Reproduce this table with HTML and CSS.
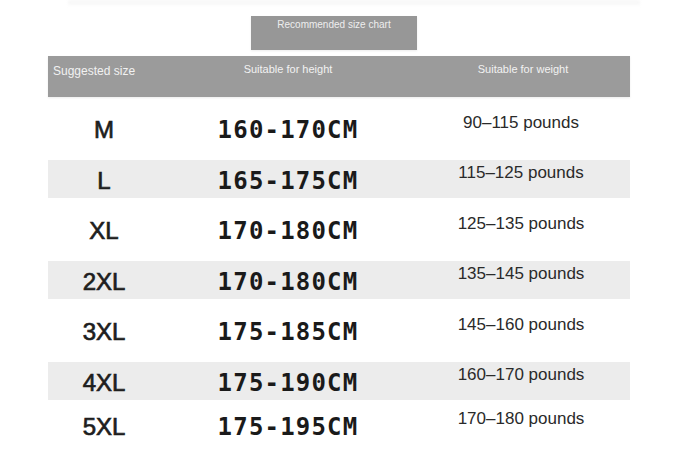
FILE: index.html
```html
<!DOCTYPE html>
<html>
<head>
<meta charset="utf-8">
<link rel="stylesheet" href="styles.css">
</head>
<body>
<div class="page">
  <div class="ghost"></div>
  <div class="title-wrap">
    <div class="title">Recommended size chart</div>
  </div>
  <div class="chart">
    <div class="head">
      <div class="h h-size">Suggested size</div>
      <div class="h h-height">Suitable for height</div>
      <div class="h h-weight">Suitable for weight</div>
    </div>
    <div class="row tall">
      <div class="size">M</div><div class="height">160-170CM</div><div class="weight">90–115 pounds</div>
    </div>
    <div class="row band">
      <div class="size">L</div><div class="height">165-175CM</div><div class="weight">115–125 pounds</div>
    </div>
    <div class="row tall">
      <div class="size">XL</div><div class="height">170-180CM</div><div class="weight">125–135 pounds</div>
    </div>
    <div class="row band">
      <div class="size">2XL</div><div class="height">170-180CM</div><div class="weight">135–145 pounds</div>
    </div>
    <div class="row tall">
      <div class="size">3XL</div><div class="height">175-185CM</div><div class="weight">145–160 pounds</div>
    </div>
    <div class="row band">
      <div class="size">4XL</div><div class="height">175-190CM</div><div class="weight">160–170 pounds</div>
    </div>
    <div class="row last">
      <div class="size">5XL</div><div class="height">175-195CM</div><div class="weight">170–180 pounds</div>
    </div>
  </div>
</div>
</body>
</html>
```

FILE: styles.css
```css
html, body {
  margin: 0;
  padding: 0;
  background: #ffffff;
}
body {
  width: 685px;
  height: 462px;
  overflow: hidden;
  font-family: "Liberation Sans", Arial, sans-serif;
}
.page {
  padding: 0 55px 0 48px;
}
.ghost {
  height: 5px;
  margin: 0 -10px 0 20px;
  background: #f8f8f8;
  filter: blur(1.5px);
}
.title-wrap {
  display: flex;
  padding: 11px 0 0 203px;
  height: 40px;
}
.title {
  width: 166px;
  height: 34px;
  background: #979797;
  color: #eeeeee;
  font-size: 10px;
  text-align: center;
  padding-top: 3px;
  box-sizing: border-box;
  box-shadow: 0 1px 2px rgba(0,0,0,0.08);
}
.chart {
  width: 582px;
}
.head {
  display: grid;
  grid-template-columns: 112px 256px 214px;
  height: 41px;
  background: #9b9b9b;
  color: #f2f2f2;
  font-size: 11px;
  box-shadow: 0 1px 2px rgba(0,0,0,0.08);
}
.h {
  padding-top: 7px;
}
.h-size {
  font-size: 12px;
  padding-top: 8px;
  padding-left: 5px;
}
.h-height {
  text-align: center;
}
.h-weight {
  text-align: center;
}
.row {
  display: grid;
  grid-template-columns: 112px 256px 214px;
  align-items: center;
  box-sizing: border-box;
  padding-top: 3px;
}
.row.tall {
  height: 63px;
}
.row.band {
  height: 38px;
  background: #ececec;
}
.row.last {
  height: 50px;
}
.size {
  text-align: center;
  font-size: 24px;
  color: #1e1e1e;
  -webkit-text-stroke: 0.7px #1e1e1e;
}
.height {
  text-align: center;
  font-family: "DejaVu Sans Mono", "Liberation Mono", monospace;
  font-weight: bold;
  font-size: 24px;
  letter-spacing: 1.2px;
  color: #1a1a1a;
}
.weight {
  text-align: center;
  font-size: 17px;
  color: #2a2a2a;
  padding-right: 4px;
  padding-bottom: 15px;
}
```
